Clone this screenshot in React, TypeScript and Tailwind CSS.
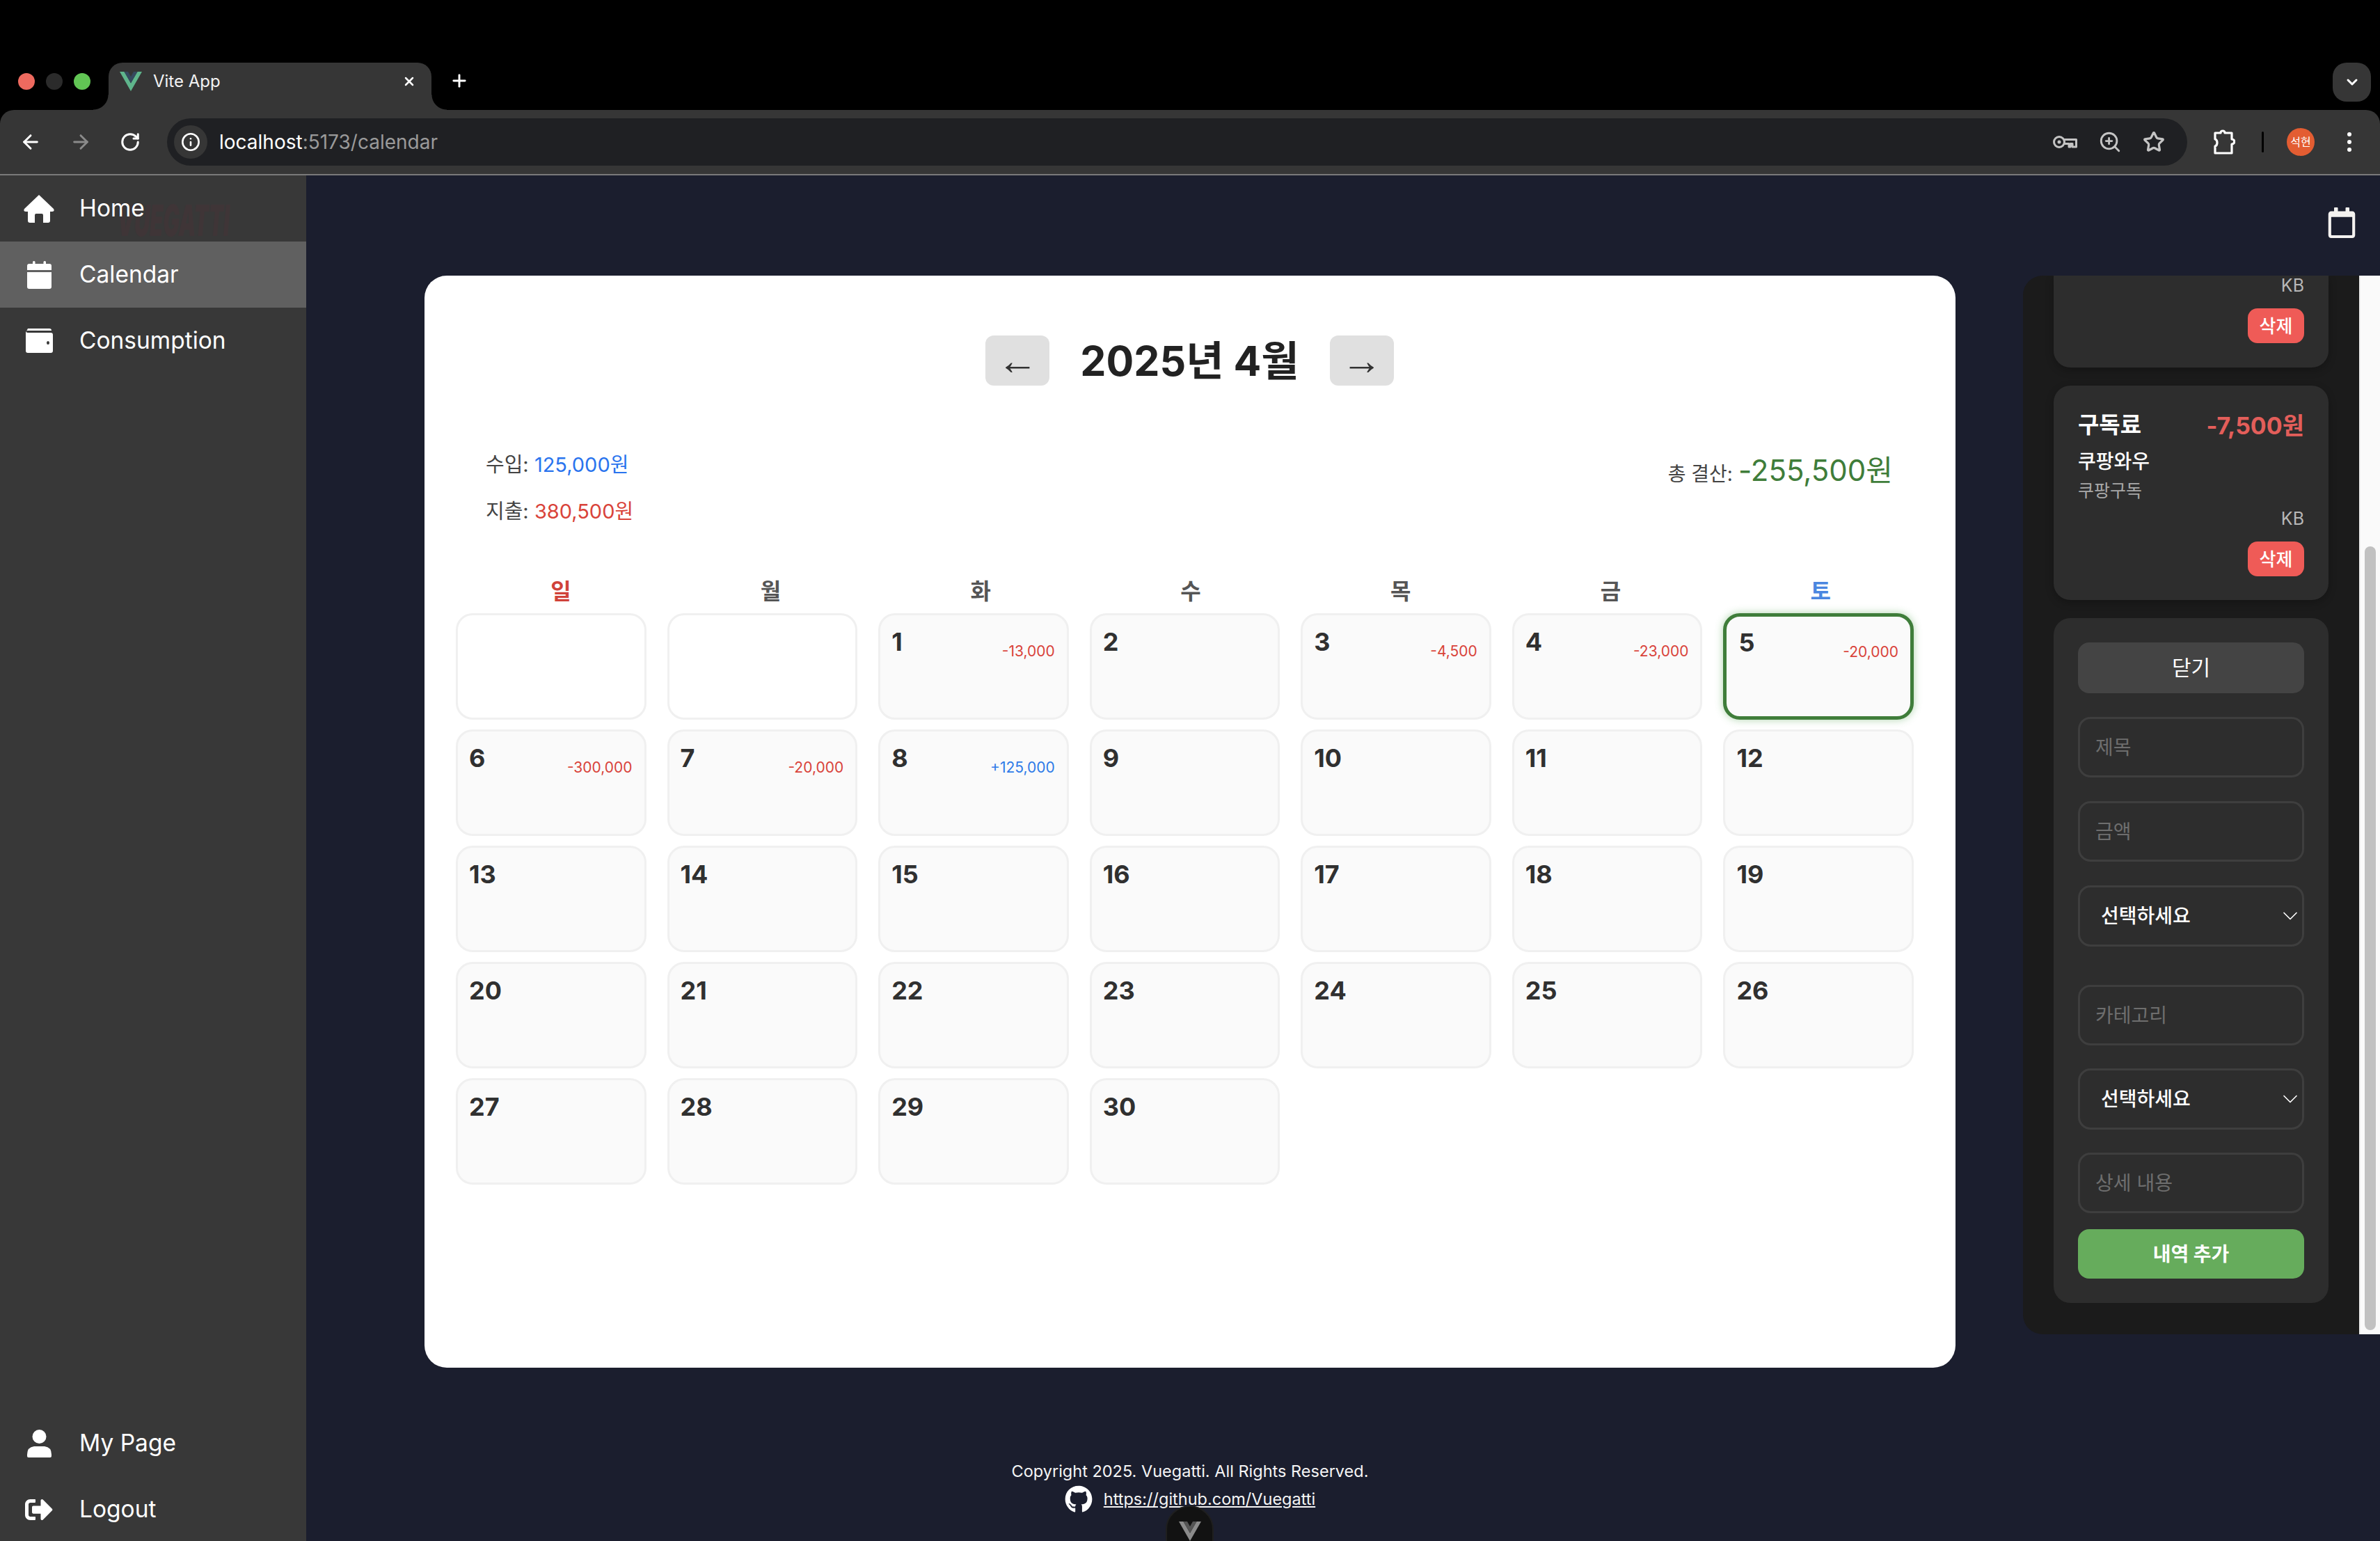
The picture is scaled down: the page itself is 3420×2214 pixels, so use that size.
import React from 'react';
import { FaSignOutAlt, FaRegCalendar, FaGithub } from 'react-icons/fa';
import { ArrowLeft, ArrowRight, RotateCw, Info, ZoomIn, Star, ChevronDown, X, Plus } from 'lucide-react';

const VueLogo = ({ className, outer, inner }: { className: string; outer: string; inner: string }) => (
  <svg viewBox="0 0 32 28" className={className}>
    <polygon points="0,0 6.5,0 16,16.5 25.5,0 32,0 16,28" fill={outer} />
    <polygon points="6.5,0 12,0 16,7 20,0 25.5,0 16,16.5" fill={inner} />
  </svg>
);

const KeyIcon = () => (
  <svg viewBox="0 0 36 20" className="w-[36px] h-[20px]" fill="none" stroke="#c4c4c4" strokeWidth="3">
    <circle cx="10" cy="10" r="7.5" />
    <circle cx="10" cy="10" r="2.5" fill="#c4c4c4" stroke="none" />
    <path d="M17 6.5H34.5V17H29V12.5H26V17H24V12.5H17" strokeLinejoin="round" />
  </svg>
);

const PuzzleIcon = () => (
  <svg viewBox="0 0 32 38" className="w-[32px] h-[38px]" fill="none" stroke="#fff" strokeWidth="3.2" strokeLinejoin="round">
    <path d="M3 6H11C11 2 17 2 17 6H27V15C32 15 32 22 27 22V35H3V25C7 24 7 16 3 15Z" />
  </svg>
);

const HomeIcon = () => (
  <svg viewBox="0 0 44 40" className="w-[44px] h-[40px]" fill="#fff">
    <path d="M22 0L43 20Q45 24 41 24H38V37Q38 40 35 40H28V29Q28 27 26 27H18Q16 27 16 29V40H9Q6 40 6 37V24H3Q-1 24 1 20Z" />
  </svg>
);

const CalendarIcon = () => (
  <svg viewBox="0 0 35 40" className="w-[35px] h-[40px]" fill="#fff">
    <rect x="8" y="0" width="3.5" height="8" rx="1.5" />
    <rect x="23.5" y="0" width="3.5" height="8" rx="1.5" />
    <path d="M3 4H32Q35 4 35 7V13H0V7Q0 4 3 4Z" />
    <path d="M0 16H35V37Q35 40 32 40H3Q0 40 0 37Z" />
  </svg>
);

const WalletIcon = () => (
  <svg viewBox="0 0 39 35" className="w-[39px] h-[35px]" fill="#fff">
    <path d="M3 0H34Q37 0 37 3H3Q1 3 1 4Z" />
    <path fillRule="evenodd" d="M3 6H36Q39 6 39 9V32Q39 35 36 35H3Q0 35 0 32V3Q0 6 3 6ZM32 18A2 2.5 0 1 0 32 23A2 2.5 0 1 0 32 18Z" />
  </svg>
);

const UserIcon = () => (
  <svg viewBox="0 0 35 40" className="w-[35px] h-[40px]" fill="#fff">
    <circle cx="17.5" cy="10" r="10" />
    <path d="M10 24H25Q35 25 35 36V38Q35 40 33 40H2Q0 40 0 38V36Q0 25 10 24Z" />
  </svg>
);

const NavItem = ({ icon, label, active }: { icon: React.ReactNode; label: string; active?: boolean }) => (
  <div className={`h-[95px] flex items-center ${active ? 'bg-[#606060]' : ''}`}>
    <div className="w-[114px] flex justify-center pr-[2px] text-white shrink-0">{icon}</div>
    <span className="text-[33.5px] text-white leading-none relative">{label}</span>
  </div>
);

const Field = ({ placeholder, className = '' }: { placeholder: string; className?: string }) => (
  <input
    placeholder={placeholder}
    className={`w-full h-[87px] rounded-[18px] border-[3px] border-[#3e3e3e] bg-[#2d2d2d] pl-[22px] text-[28px] text-white placeholder:text-[#6e6e6e] outline-none ${className}`}
  />
);

const SelectField = ({ className = '' }: { className?: string }) => (
  <div className={`relative ${className}`}>
    <select className="w-full h-[88px] appearance-none rounded-[18px] border-[3px] border-[#3e3e3e] bg-[#2d2d2d] pl-[30px] text-[28px] font-medium text-white outline-none">
      <option>선택하세요</option>
    </select>
    <ChevronDown className="absolute right-[2px] top-[26px] w-[36px] h-[36px] text-white" strokeWidth={1.1} />
  </div>
);

const DeleteBtn = () => (
  <button className="h-[50px] w-[81px] rounded-[14px] bg-[#ef5b57] text-[26px] font-medium text-white flex items-center justify-center">삭제</button>
);

const amounts: Record<number, string> = {
  1: '-13,000', 3: '-4,500', 4: '-23,000', 5: '-20,000', 6: '-300,000', 7: '-20,000', 8: '+125,000',
};

const DayCell = ({ day }: { day: number }) => {
  const selected = day === 5;
  const amt = amounts[day];
  return (
    <div
      className={`h-[153px] rounded-[24px] flex justify-between items-start bg-[#fafafa] ${
        selected
          ? 'border-[5px] border-[#3f7d3a] shadow-[0_0_12px_rgba(76,160,70,0.45)] px-[17px] pt-[17px]'
          : 'border-[3px] border-[#f0f0f0] pl-[16px] pr-[17px] pt-[18px]'
      }`}
    >
      <span className="text-[36px] font-bold leading-[40px] text-[#303030]">{day}</span>
      {amt && (
        <span className={`text-[21px] leading-[28px] mt-[20px] ${amt.startsWith('+') ? 'text-[#2f7be8]' : 'text-[#d9433a]'}`}>{amt}</span>
      )}
    </div>
  );
};

const weekdays = [
  { t: '일', c: 'text-[#d0423a]' },
  { t: '월', c: 'text-[#555555]' },
  { t: '화', c: 'text-[#555555]' },
  { t: '수', c: 'text-[#555555]' },
  { t: '목', c: 'text-[#555555]' },
  { t: '금', c: 'text-[#555555]' },
  { t: '토', c: 'text-[#4a86e0]' },
];

export default function App() {
  return (
    <div className="w-[3420px] h-[2214px] overflow-hidden bg-black flex flex-col font-[Inter,'Noto_Sans_CJK_KR',sans-serif]">
      {/* Tab strip */}
      <div className="h-[158px] shrink-0 flex items-end relative">
        <div className="flex items-center gap-[16px] pl-[26px] h-[68px] self-end mb-0">
          <div className="w-[24px] h-[24px] rounded-full bg-[#ee6a5f] -mt-[14px]" />
          <div className="w-[24px] h-[24px] rounded-full bg-[#2b2b2b] -mt-[14px]" />
          <div className="w-[24px] h-[24px] rounded-full bg-[#61c554] -mt-[14px]" />
        </div>
        <div className="relative ml-[26px] w-[464px] h-[68px] bg-[#363636] rounded-t-[20px] flex items-center pl-[16px] pr-[22px] pb-[15px]">
          <div className="absolute -left-[22px] bottom-0 w-[22px] h-[22px] bg-[radial-gradient(circle_at_0_0,#000_21px,#363636_22px)]" />
          <div className="absolute -right-[22px] bottom-0 w-[22px] h-[22px] bg-[radial-gradient(circle_at_100%_0,#000_21px,#363636_22px)]" />
          <VueLogo className="w-[32px] h-[28px]" outer="#5fb58c" inner="#35495e" />
          <span className="ml-[16px] text-[24px] text-[#f2f2f2] flex-1">Vite App</span>
          <X className="w-[20px] h-[20px] text-white" strokeWidth={3} />
        </div>
        <Plus className="ml-[26px] mb-[28px] w-[28px] h-[28px] text-white self-end" strokeWidth={2.5} />
        <div className="absolute right-[13px] top-[90px] w-[55px] h-[56px] rounded-[20px] bg-[#363636] flex items-center justify-center">
          <ChevronDown className="w-[24px] h-[24px] text-white" strokeWidth={3} />
        </div>
      </div>

      {/* Toolbar */}
      <div className="h-[94px] shrink-0 bg-[#363636] rounded-t-[20px] border-b-[2px] border-[#7a7a7a] flex items-start pt-[12px]">
        <div className="w-[240px] h-[68px] flex items-center pl-[28px] gap-[40px] shrink-0">
          <ArrowLeft className="w-[32px] h-[32px] text-white" strokeWidth={2.2} />
          <ArrowRight className="w-[32px] h-[32px] text-[#8a8a8a]" strokeWidth={2.2} />
          <RotateCw className="w-[30px] h-[30px] text-white" strokeWidth={2.4} />
        </div>
        <div className="w-[2903px] h-[68px] rounded-full bg-[#1f2023] flex items-center pl-[10px] pr-[32px]">
          <div className="w-[48px] h-[48px] rounded-full bg-[#363636] flex items-center justify-center">
            <Info className="w-[28px] h-[28px] text-white" strokeWidth={2.2} />
          </div>
          <span className="ml-[17px] text-[28px] text-white">localhost<span className="text-[#9a9a9a]">:5173/calendar</span></span>
          <div className="ml-auto flex items-center gap-[30px]">
            <KeyIcon />
            <ZoomIn className="w-[34px] h-[34px] text-[#c4c4c4]" strokeWidth={2} />
            <Star className="w-[32px] h-[32px] text-[#c4c4c4]" strokeWidth={2.4} />
          </div>
        </div>
        <div className="flex-1 h-[68px] flex items-center pl-[37px]">
          <PuzzleIcon />
          <div className="ml-[38px] w-[3px] h-[30px] bg-black rounded" />
          <div className="ml-[33px] w-[40px] h-[40px] rounded-full bg-[#e35d32] flex items-center justify-center text-[16px] text-white whitespace-nowrap">석현</div>
          <div className="ml-[47px] flex flex-col gap-[5px]">
            <div className="w-[6px] h-[6px] rounded-full bg-white" />
            <div className="w-[6px] h-[6px] rounded-full bg-white" />
            <div className="w-[6px] h-[6px] rounded-full bg-white" />
          </div>
        </div>
      </div>

      {/* Page */}
      <div className="flex-1 flex min-h-0 bg-[#1b1e2e]">
        <aside className="w-[440px] shrink-0 bg-[#383838] flex flex-col relative">
          <span className="absolute left-[168px] top-[34px] text-[62px] font-black italic leading-none text-[#3f3537] scale-x-[0.5] origin-left">VUEGATTI</span>
          <NavItem icon={<HomeIcon />} label="Home" />
          <NavItem icon={<CalendarIcon />} label="Calendar" active />
          <NavItem icon={<WalletIcon />} label="Consumption" />
          <div className="mt-auto -mb-[2px]">
            <NavItem icon={<UserIcon />} label="My Page" />
            <NavItem icon={<FaSignOutAlt size={40} />} label="Logout" />
          </div>
        </aside>

        <main className="flex-1 flex flex-col relative min-w-0">
          <div className="h-[144px] shrink-0 flex justify-end items-start pt-[46px] pr-[33px]">
            <FaRegCalendar size={44} className="text-[#f4f2f0]" />
          </div>

          <div className="flex items-start shrink-0">
            {/* Calendar card */}
            <section className="ml-[170px] w-[2200px] h-[1569px] bg-white rounded-[32px] px-[45px] pt-[86px] shrink-0">
              <div className="flex items-center justify-center gap-[44px] h-[72px] pr-[1px]">
                <button className="w-[92px] h-[72px] rounded-[12px] bg-[#e0e0e0] text-[58px] leading-none text-[#333333] font-['Liberation_Sans',sans-serif] flex items-center justify-center">←</button>
                <h1 className="text-[59px] font-bold text-[#222222] leading-none">2025년 4월</h1>
                <button className="w-[92px] h-[72px] rounded-[12px] bg-[#e0e0e0] text-[58px] leading-none text-[#333333] font-['Liberation_Sans',sans-serif] flex items-center justify-center">→</button>
              </div>

              <div className="flex justify-between items-center mt-[96px] pl-[43px] pr-[45px]">
                <div className="flex flex-col gap-[32px] text-[29px] leading-[35px] text-[#444444]">
                  <div>수입: <span className="text-[#2a74ee]">125,000원</span></div>
                  <div>지출: <span className="text-[#d9433a]">380,500원</span></div>
                </div>
                <div className="text-[28px] text-[#444444] flex items-baseline gap-[8px] -mt-[52px]">
                  <span>총 결산:</span>
                  <span className="text-[42px] text-[#3f7d3a]">-255,500원</span>
                </div>
              </div>

              <div className="grid grid-cols-7 w-[2112px] mt-[76px] h-[44px]">
                {weekdays.map((w) => (
                  <div key={w.t} className={`text-center text-[32px] font-bold leading-[44px] ${w.c}`}>{w.t}</div>
                ))}
              </div>

              <div className="grid grid-cols-7 gap-x-[30px] gap-y-[14px] w-[2095px] mt-[9px]">
                <div className="h-[153px] rounded-[24px] border-[3px] border-[#f0f0f0] bg-white" />
                <div className="h-[153px] rounded-[24px] border-[3px] border-[#f0f0f0] bg-white" />
                {Array.from({ length: 30 }, (_, i) => (
                  <DayCell key={i} day={i + 1} />
                ))}
              </div>
            </section>

            {/* Side panel */}
            <section className="ml-[97px] w-[513px] h-[1521px] shrink-0 flex overflow-hidden rounded-tl-[28px] rounded-bl-[28px]">
              <div className="w-[483px] h-full bg-[#1b1b1b] px-[44px] flex flex-col gap-[26px] overflow-hidden">
                <div className="h-[132px] shrink-0 bg-[#2d2d2d] rounded-b-[24px] shadow-[0_4px_12px_rgba(0,0,0,0.25)] flex flex-col items-end pr-[35px]">
                  <span className="text-[25px] leading-[28px] text-[#b8b8b8]">KB</span>
                  <div className="mt-[19px]"><DeleteBtn /></div>
                </div>

                <div className="h-[308px] shrink-0 bg-[#2d2d2d] rounded-[24px] shadow-[0_4px_12px_rgba(0,0,0,0.25)] px-[35px] pt-[36px] flex flex-col">
                  <div className="flex justify-between items-center h-[42px]">
                    <span className="text-[33px] font-bold text-white">구독료</span>
                    <span className="text-[34px] font-bold text-[#e35e5a]">-7,500원</span>
                  </div>
                  <span className="text-[28px] font-medium leading-[36px] text-white mt-[13px]">쿠팡와우</span>
                  <span className="text-[25px] leading-[30px] text-[#a8a8a8] mt-[9px]">쿠팡구독</span>
                  <span className="text-[25px] leading-[30px] text-[#b8b8b8] self-end mt-[10px]">KB</span>
                  <div className="self-end mt-[18px]"><DeleteBtn /></div>
                </div>

                <div className="h-[984px] shrink-0 bg-[#2d2d2d] rounded-[24px] px-[35px] pt-[35px] flex flex-col">
                  <button className="h-[73px] shrink-0 rounded-[16px] bg-[#444444] text-[30px] text-white">닫기</button>
                  <Field placeholder="제목" className="mt-[34px]" />
                  <Field placeholder="금액" className="mt-[34px]" />
                  <SelectField className="mt-[34px]" />
                  <Field placeholder="카테고리" className="mt-[55px]" />
                  <SelectField className="mt-[33px]" />
                  <Field placeholder="상세 내용" className="mt-[33px]" />
                  <button className="mt-[23px] h-[71px] shrink-0 rounded-[16px] bg-[#66ac5c] text-[28px] font-bold text-white">내역 추가</button>
                </div>
              </div>
              <div className="w-[30px] h-full bg-[#fafafa] border-l-[2px] border-[#eeeeee] pl-[6px] pt-[389px]">
                <div className="w-[16px] h-[1126px] rounded-full bg-[#c1c1c1]" />
              </div>
            </section>
          </div>

          {/* Footer */}
          <footer className="mt-[131px] ml-[-440px] flex flex-col items-center text-[23.5px] text-[#f5f5f5]">
            <div className="leading-[36px]">Copyright 2025. Vuegatti. All Rights Reserved.</div>
            <div className="flex items-center gap-[16px] mt-[2px] leading-[36px]">
              <FaGithub size={40} className="text-white" />
              <a className="underline">https://github.com/Vuegatti</a>
            </div>
          </footer>

          {/* Vue devtools pill */}
          <div className="absolute left-[1235px] top-[1911px] w-[69px] h-[80px] rounded-t-full bg-[#121212] border-[2px] border-[#1f1f1f] flex justify-center pt-[20px]">
            <VueLogo className="w-[32px] h-[30px]" outer="#8b8b8b" inner="#555555" />
          </div>
        </main>
      </div>
    </div>
  );
}
